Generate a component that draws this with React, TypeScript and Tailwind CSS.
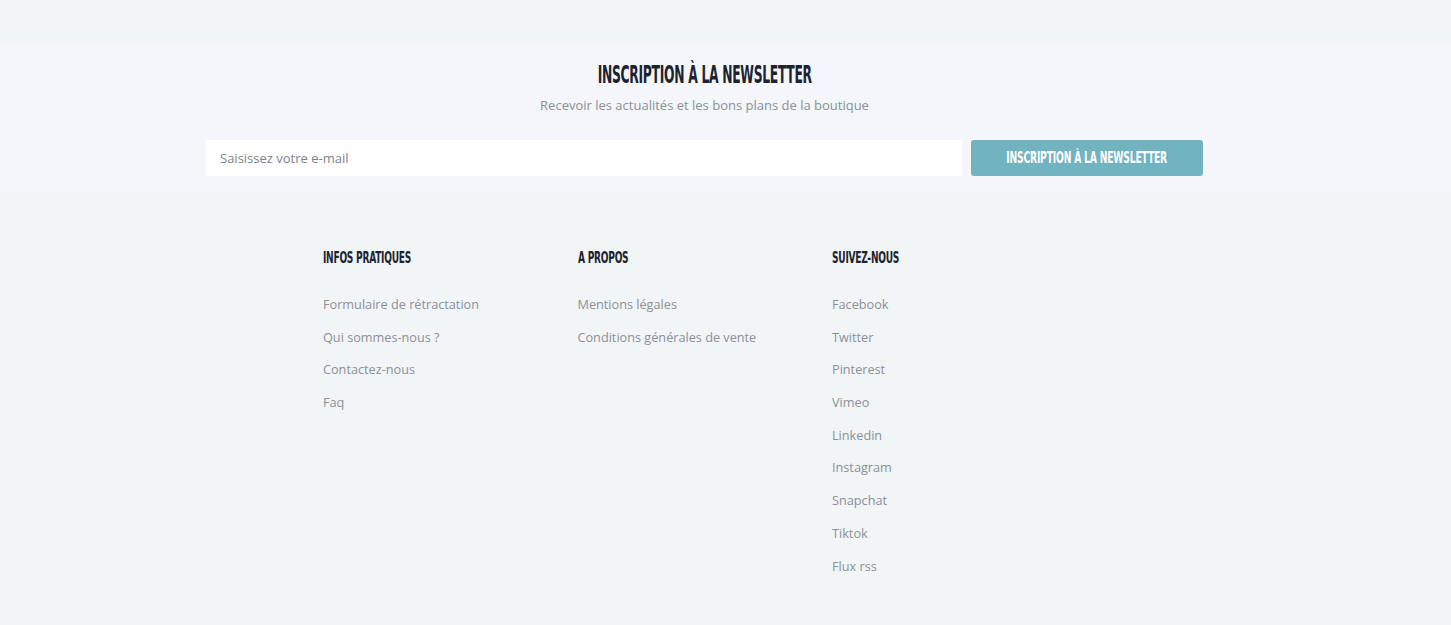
import React from 'react';

const infos = ['Formulaire de rétractation', 'Qui sommes-nous ?', 'Contactez-nous', 'Faq'];
const apropos = ['Mentions légales', 'Conditions générales de vente'];
const social = ['Facebook', 'Twitter', 'Pinterest', 'Vimeo', 'Linkedin', 'Instagram', 'Snapchat', 'Tiktok', 'Flux rss'];

// no Bebas here, so squeeze a condensed bold face to get the tall narrow look
const display = "font-['DejaVu_Sans_Condensed',sans-serif] font-bold uppercase inline-block";

function FooterColumn({ title, links }: { title: string; links: string[] }) {
  return (
    <div className="w-[254.5px]">
      <h3 className="h-[18px] leading-[18px] whitespace-nowrap">
        <span className={`${display} text-[16px] tracking-[-0.4px] text-[#1c2230] origin-left scale-x-[0.63]`}>{title}</span>
      </h3>
      <ul className="mt-[27px]">
        {links.map((l) => (
          <li key={l} className="h-[32.7px] leading-[20px]">
            <a href="#" className="text-[12.7px] text-[#8a9097]">{l}</a>
          </li>
        ))}
      </ul>
    </div>
  );
}

export default function App() {
  return (
    <div className="min-h-[625px] bg-[#f2f5f6] pt-[43px] font-['Open_Sans',sans-serif]">
      {/* Newsletter */}
      <section className="bg-[#f4f6f9] h-[149px] pt-[20px]">
        <div className="w-[997px] ml-[206px]">
          <h2 className="text-center h-[24px] leading-[24px] whitespace-nowrap">
            <span className={`${display} text-[24px] tracking-[-0.5px] text-[#1c2230] scale-x-[0.57]`}>
              Inscription à la newsletter
            </span>
          </h2>
          <p className="text-center text-[13px] leading-[18px] mt-[9px] text-[#8a9097]">
            Recevoir les actualités et les bons plans de la boutique
          </p>
          <form className="flex gap-[9px] mt-[26px]" onSubmit={(e) => e.preventDefault()}>
            <input
              type="email"
              placeholder="Saisissez votre e-mail"
              className="w-[756px] h-[36px] bg-white px-[14px] text-[13px] text-[#555] placeholder:text-[#7d838a] outline-none"
            />
            <button className="w-[232px] h-[36px] rounded-[3px] bg-[#72b3c0] flex items-center justify-center whitespace-nowrap">
              <span className={`${display} shrink-0 text-white text-[16px] tracking-[-0.3px] scale-x-[0.64]`}>
                Inscription à la newsletter
              </span>
            </button>
          </form>
        </div>
      </section>

      {/* Footer links */}
      <footer className="w-[997px] ml-[206px] pl-[117px] pt-[56px] flex">
        <FooterColumn title="Infos pratiques" links={infos} />
        <FooterColumn title="A propos" links={apropos} />
        <FooterColumn title="Suivez-nous" links={social} />
      </footer>
    </div>
  );
}
